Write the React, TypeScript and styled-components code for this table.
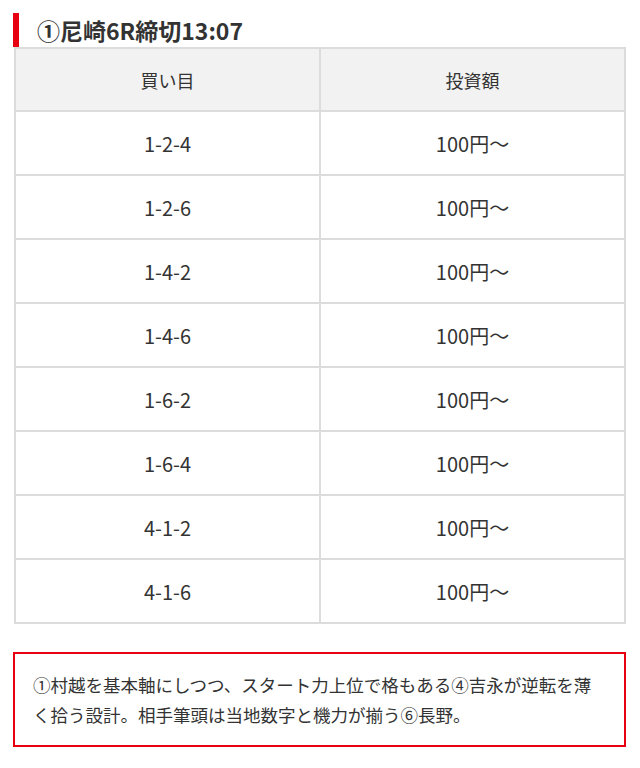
import React from "react";
import styled, { createGlobalStyle } from "styled-components";

const Global = createGlobalStyle`
  html, body { margin: 0; padding: 0; background: #fff; }
  body { font-family: "Noto Sans CJK JP", "Noto Sans", sans-serif; color: #333; }
`;

const Page = styled.div`
  padding: 13px 14px 0 13px;
`;

const Heading = styled.h3`
  margin: 0;
  height: 34px;
  border-left: 6px solid #e60012;
  padding-left: 18px;
  display: flex;
  align-items: center;
  font-size: 23px;
  font-weight: 700;
  color: #333;
  letter-spacing: 0;
`;

const Table = styled.table`
  margin-left: 1px;
  width: 612px;
  border-collapse: collapse;
  table-layout: fixed;
`;

const HeadCell = styled.th`
  height: 61px;
  background: #f2f2f2;
  border: 2px solid #dcdcdc;
  font-weight: 400;
  font-size: 18px;
  color: #333;
  text-align: center;
  padding: 0;
`;

const Cell = styled.td`
  height: 62px;
  border: 2px solid #dcdcdc;
  font-size: 20px;
  color: #333;
  text-align: center;
  padding: 0;
`;

const Note = styled.div`
  margin-top: 28px;
  border: 2px solid #e60012;
  padding: 16px 18px 15px;
  font-size: 17.5px;
  line-height: 30px;
  color: #333;
`;

const rows = ["1-2-4", "1-2-6", "1-4-2", "1-4-6", "1-6-2", "1-6-4", "4-1-2", "4-1-6"];

export default function App() {
  return (
    <>
      <Global />
      <Page>
        <Heading>①尼崎6R締切13:07</Heading>
        <Table>
          <thead>
            <tr>
              <HeadCell>買い目</HeadCell>
              <HeadCell>投資額</HeadCell>
            </tr>
          </thead>
          <tbody>
            {rows.map((r) => (
              <tr key={r}>
                <Cell>{r}</Cell>
                <Cell>100円〜</Cell>
              </tr>
            ))}
          </tbody>
        </Table>
        <Note>
          ①村越を基本軸にしつつ、スタート力上位で格もある④吉永が逆転を薄
          <br />
          く拾う設計。相手筆頭は当地数字と機力が揃う⑥長野。
        </Note>
      </Page>
    </>
  );
}
